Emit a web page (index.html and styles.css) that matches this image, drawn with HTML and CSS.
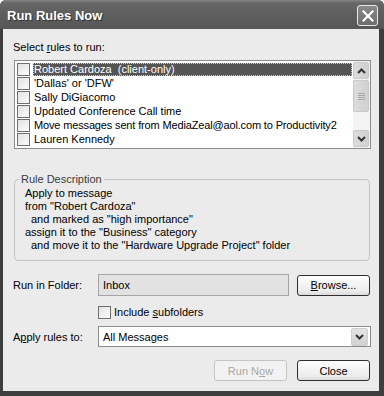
FILE: index.html
```html
<!DOCTYPE html>
<html lang="en">
<head>
    <meta charset="UTF-8">
    <title>Run Rules Now</title>
    <link rel="stylesheet" href="styles.css">
</head>
<body>
    <div class="window">
        <div class="titlebar">
            <span class="title">Run Rules Now</span>
            <button class="close-x">
                <svg width="12" height="12" viewBox="0 0 12 12"><path d="M1.5 1.5 L10.5 10.5 M10.5 1.5 L1.5 10.5" stroke="#fff" stroke-width="2.2" stroke-linecap="square"/></svg>
            </button>
        </div>

        <div class="client">
            <div class="label">Select <u>r</u>ules to run:</div>

            <div class="listbox">
                <div class="rows">
                    <div class="row selected"><span class="check"></span><span class="text">Robert Cardoza&nbsp; (client-only)</span></div>
                    <div class="row"><span class="check"></span><span class="text">'Dallas' or 'DFW'</span></div>
                    <div class="row"><span class="check"></span><span class="text">Sally DiGiacomo</span></div>
                    <div class="row"><span class="check"></span><span class="text">Updated Conference Call time</span></div>
                    <div class="row"><span class="check"></span><span class="text tight">Move messages sent from MediaZeal@aol.com to Productivity2</span></div>
                    <div class="row"><span class="check"></span><span class="text">Lauren Kennedy</span></div>
                </div>
                <div class="scrollbar">
                    <div class="sb-btn">
                        <svg width="9" height="6" viewBox="0 0 9 6"><path d="M1 5 L4.5 1.5 L8 5" fill="none" stroke="#333" stroke-width="2"/></svg>
                    </div>
                    <div class="sb-thumb">
                        <span></span><span></span><span></span><span></span>
                    </div>
                    <div class="sb-track"></div>
                    <div class="sb-btn">
                        <svg width="9" height="6" viewBox="0 0 9 6"><path d="M1 1 L4.5 4.5 L8 1" fill="none" stroke="#333" stroke-width="2"/></svg>
                    </div>
                </div>
            </div>

            <fieldset class="desc">
                <legend>Rule Description</legend>
                <div class="line">Apply to message</div>
                <div class="line">from "Robert Cardoza"</div>
                <div class="line indent">and marked as "high importance"</div>
                <div class="line">assign it to the "Business" category</div>
                <div class="line indent">and move it to the "Hardware Upgrade Project" folder</div>
            </fieldset>

            <div class="form-row folder-row">
                <span class="field-label">Run in Folder:</span>
                <div class="textbox">Inbox</div>
                <button class="btn"><u>B</u>rowse...</button>
            </div>

            <div class="form-row sub-row">
                <span class="check"></span>
                <span>Include <u>s</u>ubfolders</span>
            </div>

            <div class="form-row apply-row">
                <span class="field-label">A<u>p</u>ply rules to:</span>
                <div class="combo">
                    <span class="combo-text">All Messages</span>
                    <span class="combo-btn">
                        <svg width="9" height="6" viewBox="0 0 9 6"><path d="M1 1 L4.5 4.5 L8 1" fill="none" stroke="#333" stroke-width="2"/></svg>
                    </span>
                </div>
            </div>

            <div class="actions">
                <button class="btn disabled">Run N<u>o</u>w</button>
                <button class="btn default">Close</button>
            </div>
        </div>
    </div>
</body>
</html>
```

FILE: styles.css
```css
body {
    margin: 0;
    font-family: 'Liberation Sans', Arial, sans-serif;
    font-size: 11px;
    color: #000;
    background: #fff;
}

.window {
    width: 384px;
    height: 396px;
    background: #3e3e3e;
    display: flex;
    flex-direction: column;
    box-sizing: border-box;
    padding: 0 5px 5px 3px;
    border-radius: 6px 6px 0 0;
}

.titlebar {
    height: 29px;
    margin: 0 -5px 0 -3px;
    padding: 0 6px 0 7px;
    display: flex;
    align-items: center;
    justify-content: space-between;
    background: linear-gradient(#858585, #666 3px, #5e5e5e 50%, #575757);
    border-radius: 6px 6px 0 0;
}

.title {
    color: #fff;
    font-weight: bold;
    font-size: 13px;
    text-shadow: 1px 1px 0 #333;
    padding-top: 1px;
}

.close-x {
    width: 21px;
    height: 21px;
    padding: 0;
    margin-top: 2px;
    border: 1px solid #e8e8e8;
    border-radius: 3px;
    background: linear-gradient(#8a8a8a, #6c6c6c);
    display: flex;
    align-items: center;
    justify-content: center;
}

.client {
    flex: 1;
    background: #ebebeb;
    padding: 11px 8px 0 10px;
}

.label {
    line-height: 14px;
    margin-bottom: 6px;
}

.listbox {
    display: flex;
    height: 89px;
    box-sizing: border-box;
    margin-left: 1px;
    width: 357px;
    border: 1px solid #8c8c8c;
    background: #fff;
}

.rows {
    flex: 1;
    padding-top: 1px;
}

.row {
    display: flex;
    align-items: center;
    height: 14px;
    padding-left: 2px;
}

.check {
    width: 11px;
    height: 11px;
    border: 1px solid #6e6e6e;
    background: linear-gradient(135deg, #e2e2e2, #fbfbfb);
    flex: none;
}

.row .text {
    margin-left: 3px;
    padding: 0 1px;
    line-height: 13px;
    white-space: pre;
}

.row .text.tight {
    letter-spacing: -0.15px;
}

.row.selected .text {
    flex: 1;
    background: #555;
    color: #fff;
    outline: 1px dotted #ccc;
    outline-offset: -1px;
    margin-right: 1px;
}

.scrollbar {
    width: 17px;
    display: flex;
    flex-direction: column;
    background: #f3f3f3;
    padding: 1px 0;
}

.sb-btn,
.sb-thumb {
    height: 15px;
    border: 1px solid #c9c9c9;
    border-radius: 2px;
    background: linear-gradient(90deg, #dcdcdc, #d0d0d0);
    display: flex;
    align-items: center;
    justify-content: center;
    margin: 0 1px 0 0;
}

.sb-thumb {
    height: 30px;
    margin-top: 1px;
    flex-direction: column;
    gap: 1px;
}

.sb-thumb span {
    width: 7px;
    height: 1px;
    background: #a8a8a8;
}

.sb-track {
    flex: 1;
}

.desc {
    margin: 23px 0 0 1px;
    width: 356px;
    box-sizing: border-box;
    height: 89px;
    border: 1px solid #c4c4c4;
    border-radius: 4px;
    padding: 1px 10px 0 10px;
}

.desc legend {
    margin-left: -6px;
    padding: 0 2px;
    line-height: 14px;
    color: #3c3c3c;
}

.line {
    line-height: 13px;
}

.line.indent {
    padding-left: 6px;
}

.form-row {
    display: flex;
    align-items: center;
}

.field-label {
    width: 85px;
    flex: none;
}

.folder-row {
    margin-top: 13px;
    height: 22px;
}

.textbox {
    width: 191px;
    height: 22px;
    box-sizing: border-box;
    border: 1px solid #a5a5a5;
    background: #e2e2e2;
    padding: 0 4px;
    line-height: 20px;
}

.btn {
    font-family: 'Liberation Sans', Arial, sans-serif;
    font-size: 11px;
    width: 73px;
    height: 21px;
    padding: 0;
    border: 1px solid #2e2e2e;
    border-radius: 3px;
    background: linear-gradient(#fdfdfd, #ececec 80%, #dadada);
    color: #000;
}

.folder-row .btn {
    margin-left: 8px;
}

.sub-row {
    margin: 9px 0 0 85px;
    height: 14px;
}

.sub-row .check {
    margin-right: 3px;
}

.apply-row {
    margin-top: 7px;
}

.combo {
    width: 273px;
    height: 21px;
    box-sizing: border-box;
    border: 1px solid #8c8c8c;
    background: #fff;
    display: flex;
    align-items: center;
    justify-content: space-between;
    padding: 0 2px 0 4px;
}

.combo-btn {
    width: 15px;
    height: 16px;
    border: 1px solid #cfcfcf;
    border-radius: 2px;
    background: linear-gradient(#e4e4e4, #d2d2d2);
    display: flex;
    align-items: center;
    justify-content: center;
}

.actions {
    display: flex;
    justify-content: flex-end;
    gap: 10px;
    margin: 13px 1px 0 0;
}

.btn.disabled {
    color: #a8a8a8;
    border-color: #c4c4c4;
    background: #f2f2f2;
}
```
